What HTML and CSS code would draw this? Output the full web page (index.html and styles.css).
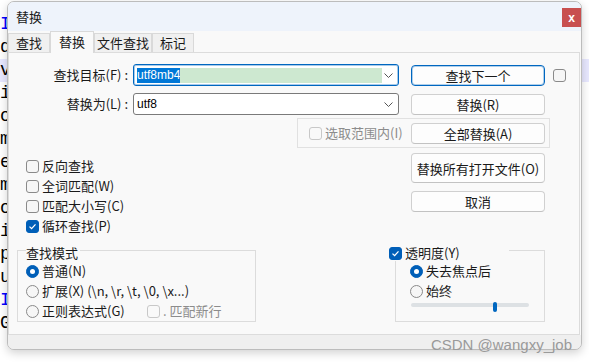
FILE: index.html
```html
<!DOCTYPE html>
<html>
  <head>
    <meta charset="UTF-8" />
    <title>替换</title>
    <link rel="stylesheet" href="styles.css">
  </head>
  <body>
    <div class="editor">
      <div class="line"><span class="kw">I</span></div>
      <div class="line">d</div>
      <div class="line cur">v</div>
      <div class="line">i</div>
      <div class="line">o</div>
      <div class="line">m</div>
      <div class="line">e</div>
      <div class="line">m</div>
      <div class="line">o</div>
      <div class="line">i</div>
      <div class="line">p</div>
      <div class="line">u</div>
      <div class="line"><span class="kw">I</span></div>
      <div class="line">G</div>
    </div>

    <div class="dialog">
      <div class="titlebar">
        <span class="title">替换</span>
        <span class="close">x</span>
      </div>
      <div class="tabs">
        <div class="tab">查找</div>
        <div class="tab active">替换</div>
        <div class="tab">文件查找</div>
        <div class="tab">标记</div>
      </div>

      <div class="panel">
        <div class="row row-find">
          <span class="field-label">查找目标(F) :</span>
          <div class="combo focus">
            <span class="combo-text"><span class="sel">utf8mb4</span><span class="hl"></span></span>
            <svg class="chev" width="9" height="5" viewBox="0 0 9 5"><path d="M0.5 0.5 L4.5 4.5 L8.5 0.5" fill="none" stroke="#555" stroke-width="1"/></svg>
          </div>
          <button class="btn focus">查找下一个</button>
          <span class="cb"></span>
        </div>

        <div class="row row-replace">
          <span class="field-label">替换为(L) :</span>
          <div class="combo">
            <span class="combo-text">utf8</span>
            <svg class="chev" width="9" height="5" viewBox="0 0 9 5"><path d="M0.5 0.5 L4.5 4.5 L8.5 0.5" fill="none" stroke="#555" stroke-width="1"/></svg>
          </div>
          <button class="btn">替换(R)</button>
        </div>

        <div class="scope">
          <span class="cb disabled"></span>
          <span class="muted">选取范围内(I)</span>
          <button class="btn">全部替换(A)</button>
        </div>

        <div class="middle">
          <div class="options">
            <div class="check"><span class="cb"></span>反向查找</div>
            <div class="check"><span class="cb"></span>全词匹配(W)</div>
            <div class="check"><span class="cb"></span>匹配大小写(C)</div>
            <div class="check">
              <span class="cb on"><svg width="11" height="11" viewBox="0 0 11 11"><path d="M2.5 5.6 L4.6 7.6 L8.5 3.4" fill="none" stroke="#fff" stroke-width="1.3"/></svg></span>循环查找(P)
            </div>
          </div>
          <div class="actions">
            <button class="btn tall">替换所有打开文件(O)</button>
            <button class="btn">取消</button>
          </div>
        </div>

        <div class="groups">
          <fieldset class="mode">
            <legend>查找模式</legend>
            <div class="radio"><span class="rb on"></span>普通(N)</div>
            <div class="radio"><span class="rb"></span>扩展(X) (\n, \r, \t, \0, \x...)</div>
            <div class="radio">
              <span class="rb"></span><span class="regex-label">正则表达式(G)</span>
              <span class="cb disabled"></span><span class="muted">. 匹配新行</span>
            </div>
          </fieldset>

          <fieldset class="trans">
            <legend>
              <span class="cb on"><svg width="11" height="11" viewBox="0 0 11 11"><path d="M2.5 5.6 L4.6 7.6 L8.5 3.4" fill="none" stroke="#fff" stroke-width="1.3"/></svg></span>透明度(Y)
            </legend>
            <div class="radio"><span class="rb on"></span>失去焦点后</div>
            <div class="radio"><span class="rb"></span>始终</div>
            <div class="slider">
              <div class="track"></div>
              <div class="thumb"></div>
            </div>
          </fieldset>
        </div>
      </div>

      <div class="footer"></div>
    </div>

    <div class="watermark">CSDN @wangxy_job</div>
  </body>
</html>
```

FILE: styles.css
```css
* {
  box-sizing: border-box;
}
body {
  margin: 0;
  width: 589px;
  height: 364px;
  overflow: hidden;
  position: relative;
  background: #ffffff;
  font-family: "Noto Sans CJK SC", "Noto Sans", sans-serif;
  font-size: 13px;
  line-height: 16px;
  color: #1a1a1a;
}

/* editor behind the dialog */
.editor {
  padding-top: 13px;
  font-family: "Liberation Mono", monospace;
  font-size: 18px;
  line-height: 23px;
  color: #000000;
}
.line {
  height: 23px;
  white-space: pre;
}
.line.cur {
  background: #e8e8ff;
}
.kw {
  color: #0000ff;
}

/* dialog window */
.dialog {
  position: absolute;
  left: 7px;
  top: 1px;
  width: 575px;
  height: 349px;
  border: 1px solid #bcbcbc;
  border-radius: 7px;
  background: #f9f9f9;
  box-shadow: 0 3px 10px rgba(0, 0, 0, 0.18);
  overflow: hidden;
  display: flex;
  flex-direction: column;
}
.titlebar {
  height: 29px;
  background: #eef3fb;
  display: flex;
  justify-content: space-between;
  align-items: flex-start;
}
.title {
  padding-left: 8px;
  line-height: 29px;
}
.close {
  margin-top: 6px;
  width: 19px;
  height: 19px;
  background: #c84f4f;
  color: #ffffff;
  font: bold 12px "Liberation Sans", sans-serif;
  display: flex;
  align-items: center;
  justify-content: center;
}

.tabs {
  height: 21px;
  display: flex;
  align-items: flex-end;
}
.tab {
  height: 19px;
  min-width: 42px;
  padding: 0 2px;
  line-height: 17px;
  text-align: center;
  background: #f0f0f0;
  border: 1px solid #d9d9d9;
  border-bottom: none;
}
.tab.active {
  height: 22px;
  min-width: 44px;
  margin-bottom: -1px;
  line-height: 20px;
  background: #f9f9f9;
  position: relative;
  z-index: 1;
}

.panel {
  flex: 1;
  margin-right: 1px;
  border: 1px solid #dcdcdc;
  background: #f9f9f9;
}
.footer {
  height: 14px;
  background: #efefef;
}

/* form rows */
.row {
  display: flex;
  align-items: center;
  height: 22px;
}
.row-find {
  margin-top: 11px;
}
.row-replace {
  margin-top: 7px;
}
.field-label {
  width: 119px;
  margin-right: 3px;
  text-align: right;
}
.combo {
  margin-left: 2px;
  width: 266px;
  height: 22px;
  border: 1px solid #7a7a7a;
  border-radius: 3px;
  background: #ffffff;
  display: flex;
  align-items: center;
  padding: 0 5px 0 3px;
}
.combo.focus {
  border-color: #0067c0;
  box-shadow: inset 0 0 0 1px rgba(0, 103, 192, 0.35);
}
.combo-text {
  display: flex;
  height: 15px;
  font-family: "Liberation Sans", sans-serif;
  font-size: 12px;
  line-height: 15px;
  color: #000000;
}
.sel {
  background: #0078d7;
  color: #ffffff;
}
.hl {
  width: 202px;
  background: #cde8d0;
}
.chev {
  margin-left: auto;
}

.btn {
  width: 134px;
  height: 21px;
  padding: 0;
  border: 1px solid #d0d0d0;
  border-bottom-color: #c2c2c2;
  border-radius: 4px;
  background: #fdfdfd;
  font: inherit;
  line-height: 19px;
  color: #1a1a1a;
}
.row .btn {
  margin-left: 12px;
}
.btn.focus {
  border-color: #0067c0;
  box-shadow: inset 0 0 0 1px rgba(0, 103, 192, 0.3);
}
.btn.tall {
  height: 30px;
}
.row-find .cb {
  margin-left: 8px;
}

.scope {
  margin: 3px 0 0 288px;
  width: 253px;
  height: 30px;
  border: 1px solid #e1e1e1;
  display: flex;
  align-items: center;
  gap: 3px;
  padding: 0 4px 0 11px;
}
.scope .btn {
  margin-left: auto;
}
.muted {
  color: #8c8c8c;
}

.middle {
  display: flex;
  height: 88px;
}
.options {
  width: 402px;
  padding: 8px 0 0 17px;
}
.check,
.radio {
  height: 20px;
  display: flex;
  align-items: center;
  gap: 3px;
}
.actions {
  padding-top: 5px;
  display: flex;
  flex-direction: column;
  gap: 8px;
}

/* checkboxes and radios */
.cb {
  width: 13px;
  height: 13px;
  flex: none;
  border: 1px solid #8a8a8a;
  border-radius: 3px;
  background: #f6f6f6;
  display: flex;
  align-items: center;
  justify-content: center;
}
.cb.on {
  background: #005fb8;
  border-color: #005fb8;
}
.cb.disabled {
  border-color: #c8c8c8;
  background: #f9f9f9;
}
.rb {
  width: 13px;
  height: 13px;
  flex: none;
  border: 1px solid #8a8a8a;
  border-radius: 50%;
  background: #f6f6f6;
  display: flex;
  align-items: center;
  justify-content: center;
}
.rb.on {
  background: #005fb8;
  border-color: #005fb8;
}
.rb.on::after {
  content: "";
  width: 5px;
  height: 5px;
  border-radius: 50%;
  background: #ffffff;
}

/* group boxes */
.groups {
  display: flex;
  margin-top: 3px;
  padding-left: 8px;
}
fieldset {
  margin: 0;
  min-width: 0;
  border: 1px solid #dcdcdc;
  padding: 0 8px;
}
legend {
  padding: 6px 2px 0 0;
  line-height: 16px;
}
.mode {
  width: 239px;
}
.regex-label {
  width: 102px;
}
.trans {
  margin-left: 139px;
  width: 150px;
  padding: 0 8px 0 14px;
}
.trans legend {
  margin-left: -21px;
  width: 120px;
  background: #f9f9f9;
  display: flex;
  align-items: center;
  gap: 3px;
}
.slider {
  position: relative;
  width: 118px;
  height: 14px;
  margin-left: 1px;
}
.track {
  margin-top: 2px;
  height: 4px;
  background: #dde1e4;
  border-radius: 2px;
}
.thumb {
  position: absolute;
  left: 82px;
  top: -1px;
  width: 4px;
  height: 10px;
  border-radius: 2px;
  background: #0067c0;
}

.watermark {
  position: absolute;
  right: 17px;
  top: 336px;
  font-family: "Liberation Sans", sans-serif;
  font-size: 15px;
  line-height: 18px;
  color: #9a9a9a;
}
```
